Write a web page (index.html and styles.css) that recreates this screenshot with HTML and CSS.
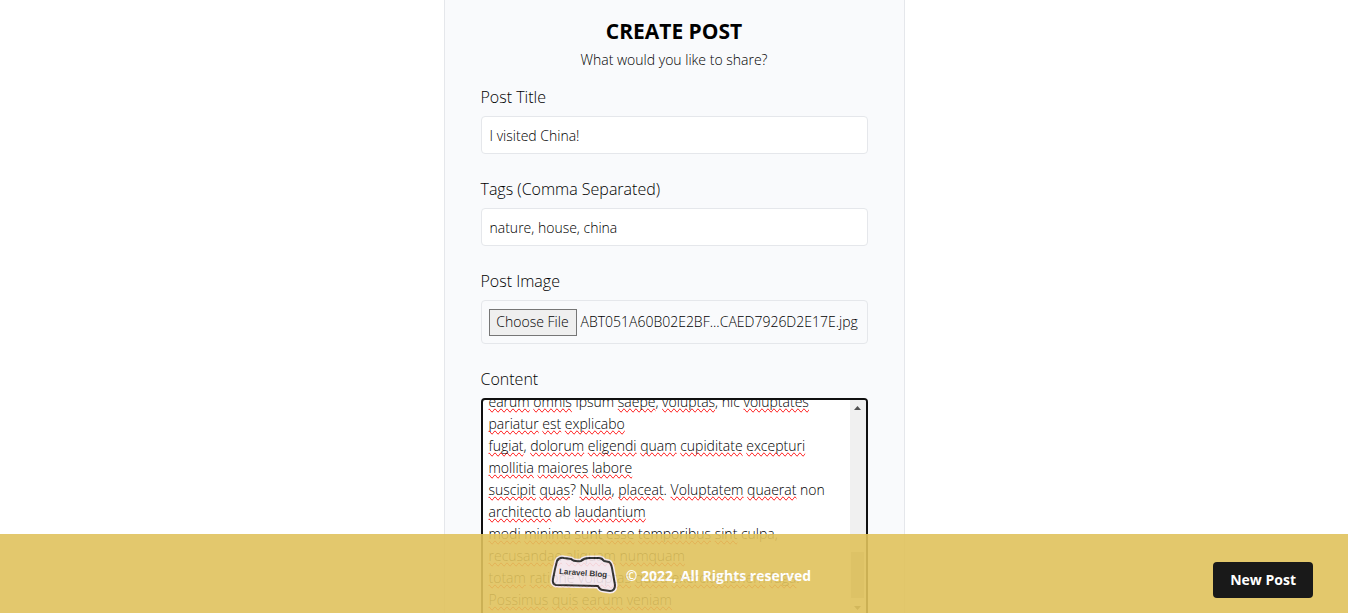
FILE: index.html
```html
<!DOCTYPE html>
<html lang="en">
<head>
<meta charset="utf-8">
<meta name="viewport" content="width=device-width, initial-scale=1">
<title>Create Post</title>
<link rel="stylesheet" href="styles.css">
</head>
<body>
<main class="page">
  <form class="card">
    <header class="card-header">
      <h2 class="title">Create Post</h2>
      <p class="subtitle">What would you like to share?</p>
    </header>
    <div class="field">
      <label for="title">Post Title</label>
      <input class="control" type="text" id="title" name="title" value="I visited China!">
    </div>
    <div class="field">
      <label for="tags">Tags (Comma Separated)</label>
      <input class="control" type="text" id="tags" name="tags" value="nature, house, china">
    </div>
    <div class="field">
      <label for="image">Post Image</label>
      <div class="control file">
        <input class="file-input" type="file" id="image" name="image">
        <output class="file-name" for="image">ABT051A60B02E2BF...CAED7926D2E17E.jpg</output>
      </div>
    </div>
    <div class="field">
      <label for="content">Content</label>
      <div class="editor">
        <div class="editor-view">
          <div class="editor-text spelling" aria-hidden="true"><u>earum</u> <u>omnis</u> ipsum <u>saepe</u>, <u>voluptas</u>, hic <u>voluptates</u>
<u>pariatur</u> <u>est</u> <u>explicabo</u>
<u>fugiat</u>, <u>dolorum</u> <u>eligendi</u> <u>quam</u> <u>cupiditate</u> <u>excepturi</u>
<u>mollitia</u> <u>maiores</u> <u>labore</u>
<u>suscipit</u> <u>quas</u>? <u>Nulla</u>, <u>placeat</u>. <u>Voluptatem</u> <u>quaerat</u> non
<u>architecto</u> ab <u>laudantium</u>
<u>modi</u> <u>minima</u> <u>sunt</u> <u>esse</u> <u>temporibus</u> <u>sint</u> culpa,
<u>recusandae</u> <u>aliquam</u> <u>numquam</u>
<u>totam</u> <u>ratione</u> <u>voluptas</u> <u>quod</u> <u>exercitationem</u> <u>fuga</u>.
<u>Possimus</u> <u>quis</u> <u>earum</u> <u>veniam</u></div>
          <textarea class="editor-text" id="content" name="content" rows="10" spellcheck="false">earum omnis ipsum saepe, voluptas, hic voluptates
pariatur est explicabo
fugiat, dolorum eligendi quam cupiditate excepturi
mollitia maiores labore
suscipit quas? Nulla, placeat. Voluptatem quaerat non
architecto ab laudantium
modi minima sunt esse temporibus sint culpa,
recusandae aliquam numquam
totam ratione voluptas quod exercitationem fuga.
Possimus quis earum veniam</textarea>
        </div>
        <div class="scrollbar" aria-hidden="true">
          <svg width="7" height="4" viewBox="0 0 7 4"><path d="M0 4 3.5 0 7 4z" fill="#505050"/></svg>
          <span class="thumb"></span>
          <svg width="7" height="4" viewBox="0 0 7 4"><path d="M0 0 3.5 4 7 0z" fill="#505050"/></svg>
        </div>
      </div>
    </div>
  </form>
</main>
<footer class="footer">
  <svg class="logo" width="70" height="42" viewBox="0 0 70 42" role="img" aria-label="Laravel Blog">
    <g fill="#f3e6ec" stroke-linejoin="round">
      <path d="M8 8Q10 4 15 5L22 6Q25 9 32 8Q35 5 40 5L50 5Q53 5 55 8L60 9Q62 10 63 15L66 32Q66 38 61 38L54 37Q51 37 49 33L7 32Q3 31 4 26L6 16Z" stroke="#f5eaee" stroke-width="5"/>
      <path d="M8 8Q10 4 15 5L22 6Q25 9 32 8Q35 5 40 5L50 5Q53 5 55 8L60 9Q62 10 63 15L66 32Q66 38 61 38L54 37Q51 37 49 33L7 32Q3 31 4 26L6 16Z" stroke="#222" stroke-width="2"/>
    </g>
    <text class="logo-text" x="10" y="21" transform="rotate(4 10 21)">Laravel Blog</text>
  </svg>
  <p class="copyright">© 2022, All Rights reserved</p>
  <a class="new-post" href="#title">New Post</a>
</footer>
</body>
</html>
```
FILE: styles.css
```css
* { box-sizing: border-box; }
body {
  margin: 0;
  height: 100vh;
  overflow: hidden;
  background: #fff;
  color: #000;
  font: 350 14px/22px "Open Sans", "Noto Sans", sans-serif;
}
.page { display: flex; justify-content: center; }
.card {
  width: 100%;
  max-width: 461px;
  padding: 15px 36px 40px;
  background: #f9fafc;
  border: solid #e5e7eb;
  border-width: 0 1px;
}
.card-header { margin-bottom: 13px; text-align: center; }
.title {
  margin: 0;
  font-size: 21px;
  line-height: 32px;
  font-weight: 700;
  text-transform: uppercase;
}
.subtitle { margin: 0; line-height: 26px; }
.field { margin-bottom: 24px; }
.field label {
  display: block;
  margin-bottom: 8px;
  font-size: 16px;
  line-height: 22px;
}
.control {
  display: block;
  width: 100%;
  height: 38px;
  padding: 0 8px;
  border: 1px solid #e5e7eb;
  border-radius: 4px;
  background: #fff;
  color: inherit;
  font: inherit;
}
.file {
  display: flex;
  align-items: center;
  gap: 4px;
  height: 44px;
  padding: 0 7px;
  background: transparent;
}
.file-input {
  flex: none;
  width: 88px;
  overflow: hidden;
  color: transparent;
  font: inherit;
}
.file-input::file-selector-button {
  width: 88px;
  height: 27px;
  margin: 0;
  padding: 0;
  border: 1px solid #767676;
  border-radius: 0;
  background: #efefef;
  color: #000;
  font: inherit;
}
.file-name { white-space: nowrap; }
.editor {
  display: flex;
  height: 220px;
  border: 2px solid #101010;
  border-radius: 4px;
  background: #fff;
  overflow: hidden;
}
.editor-view {
  display: grid;
  flex: 1;
  align-content: end;
  min-width: 0;
  overflow: hidden;
}
.editor-text {
  grid-area: 1 / 1;
  width: 100%;
  height: 225px;
  margin: 0;
  padding: 0 0 5px 6px;
  border: 0;
  outline: 0;
  background: transparent;
  color: #000;
  font: inherit;
  white-space: pre;
  resize: none;
  overflow: hidden;
}
.spelling { color: transparent; }
.spelling u { text-decoration: underline wavy red 1px; text-decoration: spelling-error; }
.scrollbar {
  display: flex;
  flex-direction: column;
  align-items: center;
  width: 16px;
  padding: 6px 0;
  background: #f0f0f0;
}
.thumb { width: 13px; height: 46px; margin: auto 0 8px; background: #c1c1c1; }
.footer {
  position: fixed;
  inset: auto 0 0;
  display: flex;
  align-items: center;
  justify-content: center;
  gap: 7px;
  height: 79px;
  padding-left: 12px;
  background: #e0c25d;
  color: #fff;
  font-weight: 700;
  opacity: .9;
}
.logo { overflow: visible; }
.logo-text {
  fill: #222;
  font: 700 8px "Liberation Sans Narrow", "Liberation Sans", sans-serif;
}
.copyright { margin: 0; padding-top: 4px; font-weight: 700; }
.new-post {
  position: absolute;
  right: 35px;
  bottom: 15px;
  padding: 7px 17px;
  border-radius: 4px;
  background: #000;
  color: #fff;
  text-decoration: none;
}
```
